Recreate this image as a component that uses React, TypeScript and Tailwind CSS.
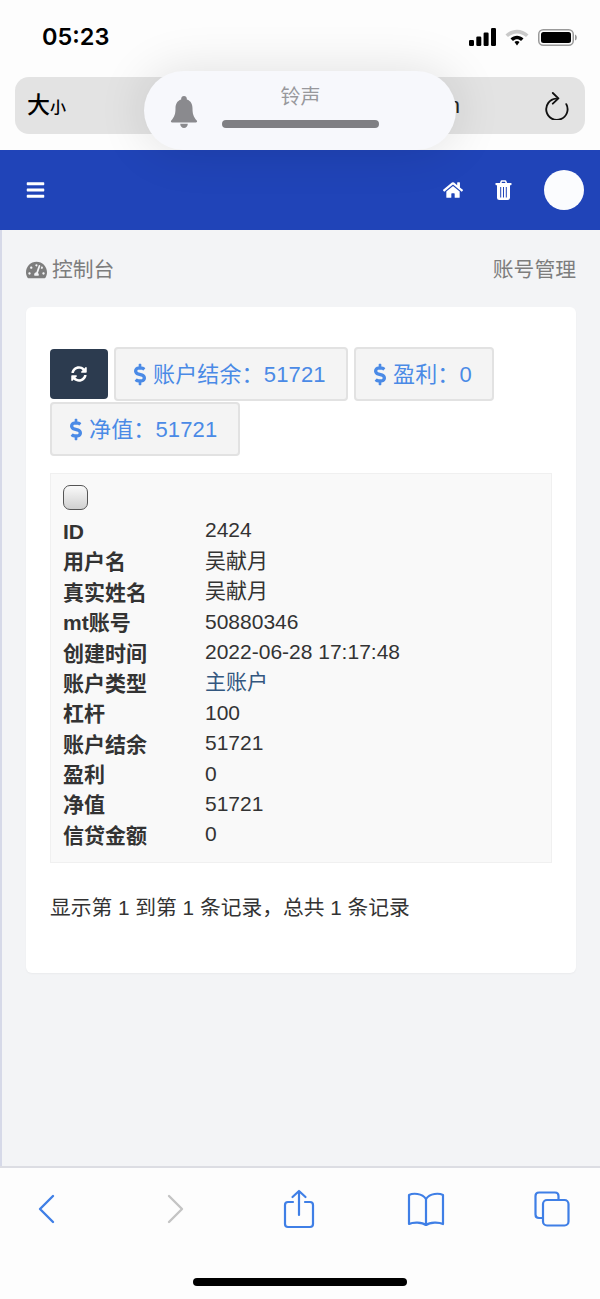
import React from 'react';
import { FaBars, FaDollarSign, FaHome, FaSyncAlt, FaTachometerAlt } from 'react-icons/fa';

const rows = [
  ['ID', '2424'],
  ['用户名', '吴献月'],
  ['真实姓名', '吴献月'],
  ['mt账号', '50880346'],
  ['创建时间', '2022-06-28 17:17:48'],
  ['账户类型', '主账户'],
  ['杠杆', '100'],
  ['账户结余', '51721'],
  ['盈利', '0'],
  ['净值', '51721'],
  ['信贷金额', '0'],
];

function StatButton({ label, className = '' }: { label: string; className?: string }) {
  return (
    <div className={`flex h-[54px] items-center gap-[7px] rounded-[4px] border-2 border-[#e2e2e2] bg-[#f4f4f4] text-[22px] tracking-[0.15px] text-[#4a8ae6] ${className}`}>
      <FaDollarSign className="h-[23px] w-[12px] shrink-0" />
      <span className="whitespace-nowrap">{label}</span>
    </div>
  );
}

function StatusIcons() {
  return (
    <div className="flex items-center gap-[9px]">
      <svg width="27" height="18" viewBox="0 0 27 18" fill="#000">
        <rect x="0" y="12" width="5" height="6" rx="1.2" />
        <rect x="7.3" y="8.5" width="5" height="9.5" rx="1.2" />
        <rect x="14.6" y="4.5" width="5" height="13.5" rx="1.2" />
        <rect x="22" y="0" width="5" height="18" rx="1.2" />
      </svg>
      <svg width="24" height="18" viewBox="0 0 24 18">
        <path d="M0.5 6.5 C7 0 17 0 23.5 6.5 L21 9 C15.5 4.2 8.5 4.2 3 9 Z" fill="#c9c9c9" />
        <path d="M5.5 10.5 C9.5 6.8 14.5 6.8 18.5 10.5 L16 13 C13.5 10.8 10.5 10.8 8 13 Z" fill="#000" />
        <path d="M9.5 14 C11 12.8 13 12.8 14.5 14 L12 17.5 Z" fill="#000" />
      </svg>
      <svg width="39" height="17" viewBox="0 0 39 17">
        <rect x="0.75" y="0.75" width="34.5" height="15.5" rx="4.5" fill="none" stroke="#9a9a9a" strokeWidth="1.5" />
        <rect x="3" y="3" width="30" height="11" rx="2.5" fill="#000" />
        <path d="M37 5.5 C38.3 6 38.8 7 38.8 8.5 C38.8 10 38.3 11 37 11.5 Z" fill="#9a9a9a" />
      </svg>
    </div>
  );
}

export default function App() {
  return (
    <div
      className="relative flex h-[1299px] w-[600px] flex-col overflow-hidden bg-[#fdfdfd]"
      style={{ fontFamily: '"Liberation Sans", "Noto Sans CJK SC", sans-serif' }}
    >
      {/* status bar + address bar */}
      <div className="h-[150px] shrink-0 px-[15px]">
        <div className="flex h-[77px] items-start justify-between pl-[27px] pr-[8px] pt-[22px]">
          <span className="text-[23.5px] font-semibold leading-[30px] text-black" style={{ fontFamily: 'Inter, sans-serif' }}>05:23</span>
          <div className="pt-[6px]"><StatusIcons /></div>
        </div>
        <div className="flex h-[57px] items-center rounded-[14px] bg-[#e3e3e3] pl-[12px] pr-[15px]">
          <span className="text-black">
            <span className="text-[23px] font-medium">大</span>
            <span className="text-[16px] font-medium">小</span>
          </span>
          <span className="ml-auto mr-[84px] text-[22px] text-[#222]">n</span>
          <svg width="26" height="28" viewBox="0 0 28 30" fill="none" stroke="#111" strokeWidth="2" strokeLinecap="round" strokeLinejoin="round">
            <path d="M13 7 A11.5 11.5 0 1 0 24 13" />
            <path d="M9.5 1 L15.5 6.8 L9.5 12.5" />
          </svg>
        </div>
      </div>

      {/* volume pill */}
      <div className="absolute left-[144px] top-[71px] flex h-[79px] w-[312px] items-center rounded-[40px] bg-[#f7f8fc] pl-[25px] shadow-[0_0_50px_rgba(0,0,0,0.12)]">
        <svg width="30" height="34" viewBox="0 0 30 36" fill="#8a8a8e" className="mt-[2px]">
          <path d="M15 1 C16.8 1 18 2.2 18 4 L18 4.8 C22.5 6.2 24 10 24 14 C24 20 25 23 28.5 27 C29.3 28 28.8 29 27.5 29 L2.5 29 C1.2 29 0.7 28 1.5 27 C5 23 6 20 6 14 C6 10 7.5 6.2 12 4.8 L12 4 C12 2.2 13.2 1 15 1 Z" />
          <path d="M11 30.5 L19 30.5 C19 33 17.2 35 15 35 C12.8 35 11 33 11 30.5 Z" />
        </svg>
        <div className="ml-[23px] flex w-[157px] flex-col items-center self-start pt-[14px]">
          <span className="text-[20px] leading-[24px] text-[#98989c]">铃声</span>
          <div className="mt-[11px] h-[8px] w-[157px] rounded-full bg-[#7f7f83]" />
        </div>
      </div>

      {/* app nav */}
      <div className="flex h-[80px] shrink-0 items-center justify-between bg-[#2044b8] pl-[26px] pr-[16px] text-white">
        <FaBars className="h-[20px] w-[19px]" />
        <div className="flex items-center">
          <FaHome className="h-[18px] w-[20px]" />
          <svg width="17" height="20" viewBox="0 0 17 20" className="ml-[32px]">
            <path d="M5.5 3.5 L6.5 1 L10.5 1 L11.5 3.5" fill="none" stroke="#fff" strokeWidth="1.6" strokeLinejoin="round" />
            <rect x="0.5" y="3" width="16" height="2.2" rx="0.6" fill="#fff" />
            <path d="M2 5 L15 5 L15 17.5 Q15 20 12.5 20 L4.5 20 Q2 20 2 17.5 Z" fill="#fff" />
            <path d="M5.7 7 L5.7 17.5 M8.5 7 L8.5 17.5 M11.3 7 L11.3 17.5" stroke="#2044b8" strokeWidth="1" />
          </svg>
          <div className="ml-[32px] h-[40px] w-[40px] rounded-full bg-[#fbfcfe]" />
        </div>
      </div>

      {/* content */}
      <div className="flex-1 border-l-2 border-[#d6d9e8] bg-[#f3f4f6] px-[24px]">
        <div className="flex h-[77px] items-center justify-between pb-[1px] pt-[3px] text-[20.8px] text-[#7d7d7d]">
          <div className="flex items-center gap-[5px]">
            <FaTachometerAlt className="h-[20px] w-[21px]" />
            <span>控制台</span>
          </div>
          <span>账号管理</span>
        </div>

        <div className="h-[666px] rounded-[6px] bg-white px-[24px] pt-[40px] shadow-[0_1px_2px_rgba(0,0,0,0.04)]">
          <div className="flex flex-wrap gap-x-[6px] gap-y-[1px]">
            <div className="mt-[2px] flex h-[50px] w-[58px] items-center justify-center rounded-[4px] bg-[#2c3b4f] text-white">
              <FaSyncAlt className="h-[16px] w-[16px]" />
            </div>
            <StatButton label="账户结余：51721" className="w-[234px] pl-[18px]" />
            <StatButton label="盈利：0" className="w-[140px] pl-[18px]" />
            <StatButton label="净值：51721" className="w-[190px] pl-[18px]" />
          </div>

          <div className="mt-[17px] h-[390px] border border-[#f0f0f0] bg-[#f9f9f9] pl-[12px] pt-[11px]">
            <div className="h-[25px] w-[25px] rounded-[7px] border border-[#555] bg-gradient-to-b from-[#fafafa] to-[#d0d0d0]" />
            <div className="mt-[5px]">
              {rows.map(([label, value]) => (
                <div key={label} className="flex h-[30.4px] items-center text-[21px] text-[#333]">
                  <span className="w-[142px] shrink-0 pt-[3px] font-bold">{label}</span>
                  <span className={label === '账户类型' ? 'text-[#33577f]' : ''}>{value}</span>
                </div>
              ))}
            </div>
          </div>

          <div className="mt-[30px] text-[20.75px] leading-[30px] text-[#333]">显示第 1 到第 1 条记录，总共 1 条记录</div>
        </div>
      </div>

      {/* safari toolbar */}
      <div className="h-[133px] shrink-0 border-t-2 border-[#dcdde3] bg-[#fdfdfd]">
        <div className="flex h-[82px] items-center justify-between pl-[26px] pr-[28px]">
          <div className="flex w-[40px] justify-center">
            <svg width="17" height="30" viewBox="0 0 17 30" fill="none" stroke="#3f7fe6" strokeWidth="2.4" strokeLinecap="round" strokeLinejoin="round"><path d="M15 2 L2 15 L15 28" /></svg>
          </div>
          <div className="flex w-[40px] justify-center pl-[6px]">
            <svg width="17" height="30" viewBox="0 0 17 30" fill="none" stroke="#c4c4c4" strokeWidth="2.4" strokeLinecap="round" strokeLinejoin="round"><path d="M2 2 L15 15 L2 28" /></svg>
          </div>
          <div className="flex w-[40px] justify-center">
            <svg width="32" height="40" viewBox="0 0 32 40" fill="none" stroke="#3f7fe6" strokeWidth="2.2" strokeLinecap="round" strokeLinejoin="round">
              <path d="M10 13 L5 13 Q2 13 2 16 L2 35 Q2 38 5 38 L27 38 Q30 38 30 35 L30 16 Q30 13 27 13 L22 13" />
              <path d="M16 26 L16 2 M9.5 8 L16 2 L22.5 8" />
            </svg>
          </div>
          <div className="flex w-[40px] justify-center">
            <svg width="38" height="34" viewBox="0 0 38 34" fill="none" stroke="#3f7fe6" strokeWidth="2.2" strokeLinecap="round" strokeLinejoin="round">
              <path d="M19 7 C15 1 6 1 2 3 L2 32 C6 30 15 30 19 33 C23 30 32 30 36 32 L36 3 C32 1 23 1 19 7 Z" />
              <path d="M19 7 L19 33" />
            </svg>
          </div>
          <div className="flex w-[40px] justify-center">
            <svg width="36" height="36" viewBox="0 0 36 36" fill="none" stroke="#3f7fe6" strokeWidth="2.2" strokeLinejoin="round">
              <path d="M8 27 L5 27 Q1.5 27 1.5 23.5 L1.5 5 Q1.5 1.5 5 1.5 L21 1.5 Q24.5 1.5 24.5 5 L24.5 9" />
              <rect x="9" y="9" width="25.5" height="25.5" rx="4" />
            </svg>
          </div>
        </div>
        <div className="mx-auto mt-[28px] h-[8px] w-[214px] rounded-full bg-black" />
      </div>
    </div>
  );
}
